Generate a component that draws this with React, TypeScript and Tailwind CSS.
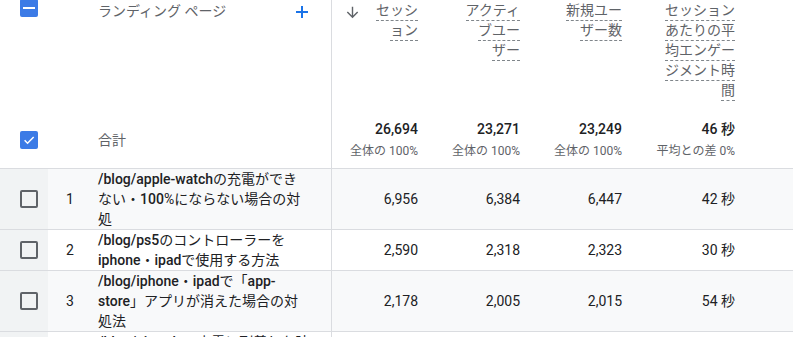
import React from "react";

const font = { fontFamily: 'Roboto, "Noto Sans CJK JP", sans-serif' };

const cols = "grid grid-cols-[48px_42px_241px_99px_102px_102px_113px_1fr]";

function HeadLines({ lines }: { lines: string[] }) {
  return (
    <div className="flex flex-col items-end">
      {lines.map((l, i) => (
        <div key={i} className="h-5 flex items-start justify-end">
          <span className="inline-block leading-[19px] border-b border-dashed border-[#80868b]">{l}</span>
        </div>
      ))}
    </div>
  );
}

function Unchecked() {
  return <div className="w-[18px] h-[18px] rounded-[2px] border-2 border-[#5f6368]" />;
}

const B = ({ children }: { children: React.ReactNode }) => <span className="font-medium">{children}</span>;

type Row = { n: number; text: React.ReactNode; v: string[]; bg: string };

const rows: Row[] = [
  {
    n: 1,
    bg: "bg-[#f8f9fa]",
    text: (
      <>
        <B>/blog/apple-watch</B>の充電ができ<br />ない・<B>100</B>%にならない場合の対<br />処
      </>
    ),
    v: ["6,956", "6,384", "6,447", "42 秒"],
  },
  {
    n: 2,
    bg: "bg-white",
    text: (
      <>
        <B>/blog/ps5</B>のコントローラーを<br />
        <B>iphone</B>・<B>ipad</B>で使用する方法
      </>
    ),
    v: ["2,590", "2,318", "2,323", "30 秒"],
  },
  {
    n: 3,
    bg: "bg-[#f8f9fa]",
    text: (
      <>
        <B>/blog/iphone</B>・<B>ipad</B>で「<B>app-</B>
        <br />
        <B>store</B>」アプリが消えた場合の対<br />処法
      </>
    ),
    v: ["2,178", "2,005", "2,015", "54 秒"],
  },
  {
    n: 4,
    bg: "bg-white",
    text: (
      <>
        <B>/blog/airpods</B>の充電に到着した時<br />の対処法
      </>
    ),
    v: ["1,902", "1,735", "1,741", "38 秒"],
  },
];

export default function App() {
  return (
    <div className="w-[793px] h-[337px] overflow-hidden bg-white text-[14px] text-[#202124]" style={font}>
      {/* header */}
      <div className={`${cols} h-[112px]`}>
        <div className="flex justify-start pl-5 -mt-px">
          <div className="w-[18px] h-[18px] rounded-[2px] bg-[#3c7be6] flex items-center justify-center">
            <div className="w-3 h-[2px] bg-white" />
          </div>
        </div>
        <div />
        <div className="flex items-start justify-between pl-2 pr-[22px] pt-px text-[#5f6368] leading-5">
          <span>ランディング ページ</span>
          <svg width="14" height="14" viewBox="0 0 14 14" className="mt-[4px]">
            <path d="M7 1v12M1 7h12" stroke="#1a73e8" strokeWidth="2" />
          </svg>
        </div>
        <div className="border-l border-[#dadce0] flex justify-between pl-[12px] pr-3 pt-px text-[#5f6368]">
          <svg width="17" height="17" viewBox="0 0 24 24" className="mt-[3px]" fill="#5f6368">
            <path d="M20 12l-1.41-1.41L13 16.17V4h-2v12.17l-5.58-5.59L4 12l8 8 8-8z" />
          </svg>
          <HeadLines lines={["セッシ", "ョン"]} />
        </div>
        <div className="pr-3 pt-px text-[#5f6368]">
          <HeadLines lines={["アクティ", "ブユー", "ザー"]} />
        </div>
        <div className="pr-3 pt-px text-[#5f6368]">
          <HeadLines lines={["新規ユー", "ザー数"]} />
        </div>
        <div className="pr-3 pt-px text-[#5f6368]">
          <HeadLines lines={["セッション", "あたりの平", "均エンゲー", "ジメント時", "間"]} />
        </div>
        <div />
      </div>

      {/* total */}
      <div className={`${cols} h-[57px] border-b border-[#dadce0]`}>
        <div className="flex items-center pl-5">
          <div className="w-[18px] h-[18px] rounded-[2px] bg-[#3c7be6] flex items-center justify-center">
            <svg width="14" height="14" viewBox="0 0 24 24" fill="none">
              <path d="M4.5 12.5l5 5L20 7" stroke="white" strokeWidth="2.6" />
            </svg>
          </div>
        </div>
        <div />
        <div className="flex items-center pl-2 text-[#5f6368]">合計</div>
        {[
          ["26,694", "全体の 100%"],
          ["23,271", "全体の 100%"],
          ["23,249", "全体の 100%"],
          ["46 秒", "平均との差 0%"],
        ].map(([a, b], i) => (
          <div
            key={i}
            className={`flex flex-col items-end justify-center pr-3 ${i === 0 ? "border-l border-[#dadce0]" : ""}`}
          >
            <div className="font-medium leading-5 -mt-[2px]">{a}</div>
            <div className="text-[12px] leading-4 mt-[4px] text-[#5f6368]">{b}</div>
          </div>
        ))}
        <div />
      </div>

      {/* rows */}
      {rows.map((r) => (
        <div key={r.n} className={`${cols} ${r.bg} border-b border-[#dadce0]`}>
          <div className="bg-[#f1f3f4] flex items-center pl-5">
            <Unchecked />
          </div>
          <div className="flex items-center pl-[18px]">{r.n}</div>
          <div className="pl-2 leading-5 whitespace-nowrap">{r.text}</div>
          {r.v.map((x, i) => (
            <div
              key={i}
              className={`flex items-center justify-end pr-3 ${i === 0 ? "border-l border-[#dadce0]" : ""}`}
            >
              {x}
            </div>
          ))}
          <div />
        </div>
      ))}
    </div>
  );
}
